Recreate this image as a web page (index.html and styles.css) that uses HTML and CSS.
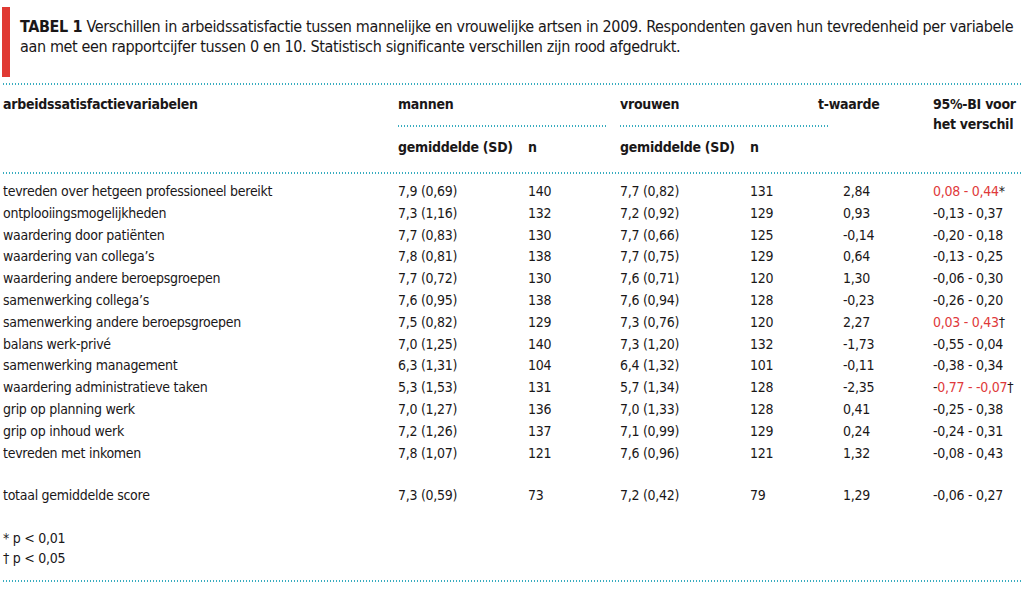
FILE: index.html
```html
<!DOCTYPE html>
<html lang="nl">
<head>
<meta charset="utf-8">
<title>Tabel 1</title>
<link rel="stylesheet" href="styles.css">
</head>
<body>
<div class="figure">
  <div class="caption">
    <span class="bar"></span>
    <p class="caption-text"><b>TABEL 1</b> Verschillen in arbeidssatisfactie tussen mannelijke en vrouwelijke artsen in 2009. Respondenten gaven hun tevredenheid per variabele<br>aan met een rapportcijfer tussen 0 en 10. Statistisch significante verschillen zijn rood afgedrukt.</p>
  </div>
  <div class="rule"></div>

  <div class="thead">
    <div class="th h-label">arbeidssatisfactievariabelen</div>
    <div class="th h-group g-men">mannen<div class="rule short"></div></div>
    <div class="th h-group g-women">vrouwen<div class="rule short"></div></div>
    <div class="th h-t">t-waarde</div>
    <div class="th h-bi">95%-BI voor<br>het verschil</div>
    <div class="th sub c2">gemiddelde (SD)</div>
    <div class="th sub c3">n</div>
    <div class="th sub c4">gemiddelde (SD)</div>
    <div class="th sub c5">n</div>
  </div>
  <div class="rule"></div>

  <div class="tbody">
    <div class="row"><span>tevreden over hetgeen professioneel bereikt</span><span>7,9 (0,69)</span><span>140</span><span>7,7 (0,82)</span><span>131</span><span class="t">2,84</span><span><span class="red">0,08 - 0,44</span>*</span></div>
    <div class="row"><span>ontplooiingsmogelijkheden</span><span>7,3 (1,16)</span><span>132</span><span>7,2 (0,92)</span><span>129</span><span class="t">0,93</span><span>-0,13 - 0,37</span></div>
    <div class="row"><span>waardering door patiënten</span><span>7,7 (0,83)</span><span>130</span><span>7,7 (0,66)</span><span>125</span><span class="t">-0,14</span><span>-0,20 - 0,18</span></div>
    <div class="row"><span>waardering van collega’s</span><span>7,8 (0,81)</span><span>138</span><span>7,7 (0,75)</span><span>129</span><span class="t">0,64</span><span>-0,13 - 0,25</span></div>
    <div class="row"><span>waardering andere beroepsgroepen</span><span>7,7 (0,72)</span><span>130</span><span>7,6 (0,71)</span><span>120</span><span class="t">1,30</span><span>-0,06 - 0,30</span></div>
    <div class="row"><span>samenwerking collega’s</span><span>7,6 (0,95)</span><span>138</span><span>7,6 (0,94)</span><span>128</span><span class="t">-0,23</span><span>-0,26 - 0,20</span></div>
    <div class="row"><span>samenwerking andere beroepsgroepen</span><span>7,5 (0,82)</span><span>129</span><span>7,3 (0,76)</span><span>120</span><span class="t">2,27</span><span><span class="red">0,03 - 0,43</span>†</span></div>
    <div class="row"><span>balans werk-privé</span><span>7,0 (1,25)</span><span>140</span><span>7,3 (1,20)</span><span>132</span><span class="t">-1,73</span><span>-0,55 - 0,04</span></div>
    <div class="row"><span>samenwerking management</span><span>6,3 (1,31)</span><span>104</span><span>6,4 (1,32)</span><span>101</span><span class="t">-0,11</span><span>-0,38 - 0,34</span></div>
    <div class="row"><span>waardering administratieve taken</span><span>5,3 (1,53)</span><span>131</span><span>5,7 (1,34)</span><span>128</span><span class="t">-2,35</span><span>-<span class="red">0,77 - -0,07</span>†</span></div>
    <div class="row"><span>grip op planning werk</span><span>7,0 (1,27)</span><span>136</span><span>7,0 (1,33)</span><span>128</span><span class="t">0,41</span><span>-0,25 - 0,38</span></div>
    <div class="row"><span>grip op inhoud werk</span><span>7,2 (1,26)</span><span>137</span><span>7,1 (0,99)</span><span>129</span><span class="t">0,24</span><span>-0,24 - 0,31</span></div>
    <div class="row"><span>tevreden met inkomen</span><span>7,8 (1,07)</span><span>121</span><span>7,6 (0,96)</span><span>121</span><span class="t">1,32</span><span>-0,08 - 0,43</span></div>
    <div class="row total"><span>totaal gemiddelde score</span><span>7,3 (0,59)</span><span>73</span><span>7,2 (0,42)</span><span>79</span><span class="t">1,29</span><span>-0,06 - 0,27</span></div>
  </div>

  <div class="notes">
    <p>* p &lt; 0,01</p>
    <p>† p &lt; 0,05</p>
  </div>
  <div class="rule"></div>
</div>
</body>
</html>
```
FILE: styles.css
```css
html, body {
  margin: 0;
  padding: 0;
  background: #ffffff;
}

body {
  font-family: "DejaVu Sans", sans-serif;
  font-stretch: condensed;
  color: #1a1718;
  font-size: 14px;
  letter-spacing: -0.27px;
}

.figure {
  padding: 0 3px;
}

.caption {
  display: flex;
  gap: 10px;
  padding-top: 7px;
  margin-left: -1px;
}

.bar {
  flex: 0 0 8px;
  height: 70px;
  background: #e03a33;
}

.caption-text {
  margin: 10px 0 0;
  font-size: 16px;
  line-height: 20px;
  letter-spacing: -0.36px;
  white-space: nowrap;
}

.rule {
  height: 2px;
  background-image: repeating-linear-gradient(to right, #38acbf 0 1px, transparent 1px 3px);
  margin-top: 6px;
}

.rule.short {
  width: 210px;
  margin-top: 11px;
}

.thead {
  display: grid;
  grid-template-columns: 395px 130px 92px 130px 68px 115px 1fr;
  grid-template-rows: auto auto;
  padding-top: 9px;
  padding-bottom: 9px;
  font-weight: bold;
  line-height: 20px;
  white-space: nowrap;
}

.h-label { grid-column: 1; grid-row: 1; }
.g-men { grid-column: 2 / span 2; grid-row: 1; }
.g-women { grid-column: 4 / span 3; grid-row: 1; }
.h-t { grid-column: 6; grid-row: 1; }
.h-bi { grid-column: 7; grid-row: 1 / span 2; }
.sub { grid-row: 2; padding-top: 10px; }
.c2 { grid-column: 2; }
.c3 { grid-column: 3; }
.c4 { grid-column: 4; }
.c5 { grid-column: 5; }

.tbody {
  padding-top: 7px;
}

.row {
  display: grid;
  grid-template-columns: 395px 130px 92px 130px 68px 115px 1fr;
  line-height: 21.8px;
  white-space: nowrap;
}

.row .t {
  padding-left: 25px;
}

.row.total {
  margin-top: 21px;
}

.red {
  color: #e0393b;
}

.notes {
  margin-top: 21px;
  line-height: 20px;
}

.notes p {
  margin: 0;
}

.notes + .rule {
  margin-top: 12px;
}
```
